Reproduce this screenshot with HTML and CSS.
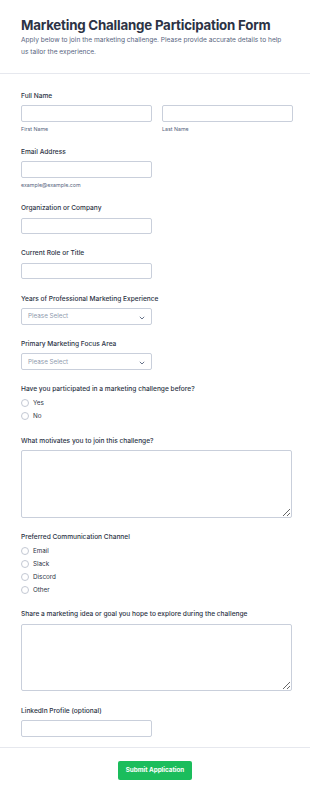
FILE: index.html
```html
<!DOCTYPE html>
<html lang="en">
<head>
<meta charset="utf-8">
<title>Marketing Challange Participation Form</title>
<link rel="stylesheet" href="styles.css">
</head>
<body>
<form class="form">
  <header class="form-header">
    <h1 class="title">Marketing Challange Participation Form</h1>
    <p class="subtitle">Apply below to join the marketing challenge. Please provide accurate details to help us tailor the experience.</p>
  </header>

  <div class="fields">
    <div class="field">
      <label class="label">Full Name</label>
      <div class="name-row">
        <div class="sub-col">
          <input class="input" type="text">
          <span class="sublabel">First Name</span>
        </div>
        <div class="sub-col">
          <input class="input" type="text">
          <span class="sublabel">Last Name</span>
        </div>
      </div>
    </div>

    <div class="field">
      <label class="label">Email Address</label>
      <div class="sub-col">
        <input class="input" type="email">
        <span class="sublabel">example@example.com</span>
      </div>
    </div>

    <div class="field">
      <label class="label">Organization or Company</label>
      <input class="input" type="text">
    </div>

    <div class="field">
      <label class="label">Current Role or Title</label>
      <input class="input" type="text">
    </div>

    <div class="field">
      <label class="label">Years of Professional Marketing Experience</label>
      <div class="select">
        <span class="placeholder">Please Select</span>
        <svg class="chev" width="6" height="4" viewBox="0 0 6 4"><path d="M0.8 0.8 L3 3 L5.2 0.8" fill="none" stroke="#57647e" stroke-width="0.9"/></svg>
      </div>
    </div>

    <div class="field">
      <label class="label">Primary Marketing Focus Area</label>
      <div class="select">
        <span class="placeholder">Please Select</span>
        <svg class="chev" width="6" height="4" viewBox="0 0 6 4"><path d="M0.8 0.8 L3 3 L5.2 0.8" fill="none" stroke="#57647e" stroke-width="0.9"/></svg>
      </div>
    </div>

    <div class="field">
      <label class="label">Have you participated in a marketing challenge before?</label>
      <div class="radios">
        <div class="radio"><span class="circle"></span><span>Yes</span></div>
        <div class="radio"><span class="circle"></span><span>No</span></div>
      </div>
    </div>

    <div class="field">
      <label class="label">What motivates you to join this challenge?</label>
      <textarea class="textarea"></textarea>
    </div>

    <div class="field">
      <label class="label">Preferred Communication Channel</label>
      <div class="radios">
        <div class="radio"><span class="circle"></span><span>Email</span></div>
        <div class="radio"><span class="circle"></span><span>Slack</span></div>
        <div class="radio"><span class="circle"></span><span>Discord</span></div>
        <div class="radio"><span class="circle"></span><span>Other</span></div>
      </div>
    </div>

    <div class="field">
      <label class="label">Share a marketing idea or goal you hope to explore during the challenge</label>
      <textarea class="textarea"></textarea>
    </div>

    <div class="field">
      <label class="label">LinkedIn Profile (optional)</label>
      <input class="input" type="text">
    </div>
  </div>

  <footer class="form-footer">
    <button class="submit" type="button">Submit Application</button>
  </footer>
</form>
</body>
</html>
```

FILE: styles.css
```css
* { box-sizing: border-box; }
html, body { margin: 0; padding: 0; background: #fff; }
body {
  font-family: Inter, "Noto Sans", sans-serif;
  color: #2c3345;
  width: 310px;
}
.form-header {
  padding: 17px 21px 15px;
  border-bottom: 1px solid #e6e8ee;
}
.title {
  margin: 0;
  font-size: 13.3px;
  line-height: 17px;
  font-weight: 700;
  letter-spacing: -0.2px;
  color: #2c3345;
}
.subtitle {
  margin: 1px 0 0;
  font-size: 6.6px;
  line-height: 11.5px;
  color: #57647e;
}
.fields {
  display: flex;
  flex-direction: column;
  gap: 14.3px;
  padding: 16.5px 18px 10px 21px;
  border-bottom: 1px solid #e6e8ee;
}
.field {
  display: flex;
  flex-direction: column;
  align-items: flex-start;
}
.label {
  font-size: 6.6px;
  line-height: 10px;
  font-weight: 500;
  color: #2c3345;
  margin-bottom: 4.5px;
}
.name-row {
  display: grid;
  grid-template-columns: 131px 131px;
  gap: 10px;
}
.sub-col {
  display: flex;
  flex-direction: column;
}
.sublabel {
  font-size: 5.3px;
  line-height: 7px;
  color: #57647e;
  margin-top: 4px;
}
.input, .select, .textarea {
  display: block;
  width: 131px;
  height: 16.5px;
  border: 1px solid #c9cfdb;
  border-radius: 2px;
  background: #fff;
  margin: 0;
  padding: 0;
  font: inherit;
  outline: none;
}
.select {
  position: relative;
  display: flex;
  align-items: center;
  padding: 0 6px;
}
.placeholder {
  font-size: 6.3px;
  color: #8f99ad;
}
.chev {
  position: absolute;
  right: 6px;
  top: 6.5px;
}
.textarea {
  width: 271px;
  height: 67.5px;
  resize: vertical;
}
.radios {
  display: flex;
  flex-direction: column;
  gap: 4.8px;
  margin: 0.5px 0 1.5px;
}
.radio {
  display: flex;
  align-items: center;
  gap: 4px;
  font-size: 6.3px;
  line-height: 8px;
  color: #2c3345;
}
.circle {
  width: 8px;
  height: 8px;
  border: 1px solid #c3c8d3;
  border-radius: 50%;
  background: #fff;
}
.form-footer {
  display: flex;
  justify-content: center;
  padding: 13px 0 17px;
}
.submit {
  width: 74.5px;
  height: 19px;
  border: 0;
  border-radius: 2px;
  background: #1bbd5c;
  color: #fff;
  font-family: Inter, sans-serif;
  font-size: 6.3px;
  font-weight: 700;
  padding: 0;
}
```
